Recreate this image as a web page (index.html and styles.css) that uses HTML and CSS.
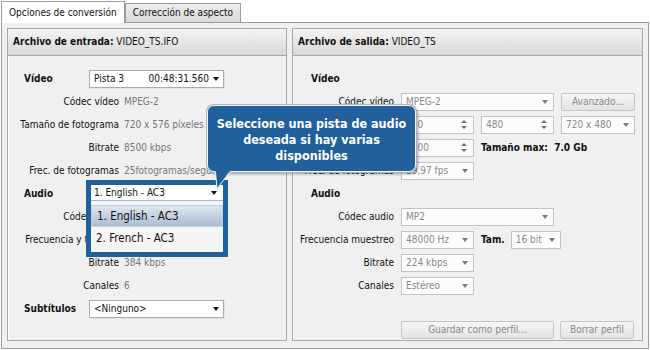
FILE: index.html
```html
<!DOCTYPE html>
<html lang="es">
<head>
  <meta charset="UTF-8" />
  <title>Opciones de conversión</title>
  <link rel="stylesheet" href="styles.css">
</head>
<body>
  <div class="window">
    <div class="tabs">
      <div class="tab active">Opciones de conversión</div>
      <div class="tab">Corrección de aspecto</div>
    </div>

    <div class="tab-body">
      <section class="panel panel-in">
        <div class="panel-head"><b>Archivo de entrada:</b> VIDEO_TS.IFO</div>
        <div class="panel-body">
          <div class="row">
            <span class="sect">Vídeo</span>
            <div class="select sel-in"><span class="grow">Pista 3</span><span>00:48:31.560</span><i class="arrow"></i></div>
          </div>
          <div class="row"><span class="lbl">Códec vídeo</span><span class="val">MPEG-2</span></div>
          <div class="row"><span class="lbl">Tamaño de fotograma</span><span class="val">720 x 576 píxeles</span></div>
          <div class="row"><span class="lbl">Bitrate</span><span class="val">8500 kbps</span></div>
          <div class="row"><span class="lbl">Frec. de fotogramas</span><span class="val">25fotogramas/segundo</span></div>
          <div class="row">
            <span class="sect">Audio</span>
            <div class="select sel-in"></div>
          </div>
          <div class="row"><span class="lbl">Códec audio</span></div>
          <div class="row"><span class="lbl">Frecuencia y tamaño</span></div>
          <div class="row"><span class="lbl">Bitrate</span><span class="val">384 kbps</span></div>
          <div class="row"><span class="lbl">Canales</span><span class="val">6</span></div>
          <div class="row">
            <span class="sect">Subtítulos</span>
            <div class="select sel-in"><span class="grow">&lt;Ninguno&gt;</span><i class="arrow"></i></div>
          </div>
        </div>
      </section>

      <section class="panel panel-out">
        <div class="panel-head"><b>Archivo de salida:</b> VIDEO_TS</div>
        <div class="panel-body">
          <div class="row"><span class="sect">Vídeo</span></div>
          <div class="row">
            <span class="lbl">Códec vídeo</span>
            <div class="field w-wide"><span class="grow">MPEG-2</span><i class="arrow"></i></div>
            <div class="btn w-btn">Avanzado...</div>
          </div>
          <div class="row">
            <span class="lbl"></span>
            <div class="field w-sm"><span class="grow">720</span><i class="spin"></i></div>
            <div class="field w-sm"><span class="grow">480</span><i class="spin"></i></div>
            <div class="field w-btn"><span class="grow">720 x 480</span><i class="arrow"></i></div>
          </div>
          <div class="row">
            <span class="lbl"></span>
            <div class="field w-sm"><span class="grow">8000</span><i class="spin"></i></div>
            <span class="note">Tamaño max:&nbsp; 7.0 Gb</span>
          </div>
          <div class="row">
            <span class="lbl">Frec. de fotogramas</span>
            <div class="field w-sm"><span class="grow">29,97 fps</span><i class="arrow"></i></div>
          </div>
          <div class="row"><span class="sect">Audio</span></div>
          <div class="row">
            <span class="lbl">Códec audio</span>
            <div class="field w-wide"><span class="grow">MP2</span><i class="arrow"></i></div>
          </div>
          <div class="row">
            <span class="lbl">Frecuencia muestreo</span>
            <div class="field w-sm"><span class="grow">48000 Hz</span><i class="arrow"></i></div>
            <span class="note">Tam.</span>
            <div class="field w-bit"><span class="grow">16 bit</span><i class="arrow"></i></div>
          </div>
          <div class="row">
            <span class="lbl">Bitrate</span>
            <div class="field w-sm"><span class="grow">224 kbps</span><i class="arrow"></i></div>
          </div>
          <div class="row">
            <span class="lbl">Canales</span>
            <div class="field w-sm"><span class="grow">Estéreo</span><i class="arrow"></i></div>
          </div>
          <div class="row row-btns">
            <span class="lbl"></span>
            <div class="btn w-wide">Guardar como perfil...</div>
            <div class="btn w-btn">Borrar perfil</div>
          </div>
        </div>
      </section>
    </div>

    <!-- open audio track list -->
    <div class="dropdown">
      <div class="dd-select"><span class="grow">1. English - AC3</span><i class="arrow"></i></div>
      <div class="dd-item hl">1. English - AC3</div>
      <div class="dd-item">2. French - AC3</div>
    </div>

    <div class="tip">
      Seleccione una pista de audio<br>deseada si hay varias<br>disponibles
      <svg class="tip-arrow" width="30" height="26" viewBox="0 0 30 26">
        <polygon points="7,0 26,0 9,23" fill="#22609c"/>
        <polyline points="21.6,6 9,23 7.5,6" fill="none" stroke="#f4f6f8" stroke-width="1"/>
      </svg>
    </div>
  </div>
</body>
</html>
```

FILE: styles.css
```css
* {
  margin: 0;
  padding: 0;
  box-sizing: border-box;
}

body {
  background: #fff;
  font-family: "DejaVu Sans Condensed", "DejaVu Sans", sans-serif;
  font-stretch: condensed;
  font-size: 10px;
  color: #111;
}

.window {
  position: relative;
  width: 650px;
  height: 350px;
  overflow: hidden;
}

/* tabs */
.tabs {
  display: flex;
  align-items: flex-end;
  height: 22px;
  padding-left: 1px;
}

.tab {
  height: 19px;
  padding: 0 7px;
  line-height: 18px;
  border: 1px solid #9c9c9c;
  border-bottom: none;
  background: linear-gradient(#ededed, #d9d9d9);
  white-space: nowrap;
}

.tab.active {
  height: 22px;
  margin-bottom: -1px;
  line-height: 21px;
  background: #fff;
  position: relative;
  z-index: 1;
}

.tab-body {
  display: flex;
  gap: 5px;
  width: 648px;
  height: 327px;
  margin-left: 1px;
  padding: 5px 5px 7px 5px;
  border: 1px solid #9c9c9c;
  background: #f0f0f0;
}

/* panels */
.panel {
  height: 313px;
  border: 1px solid #a8a8a8;
  background: #f0f0f0;
  box-shadow: inset 1px 1px 0 #fff;
  overflow: hidden;
}

.panel-in { width: 280px; }
.panel-out { width: 351px; }

.panel-head {
  height: 27px;
  line-height: 26px;
  padding-left: 5px;
  border-bottom: 1px solid #a8a8a8;
  background: linear-gradient(#f4f4f4, #d8d8d8);
  white-space: nowrap;
}

.panel-body {
  padding-top: 11px;
}

.panel-in .panel-body { padding-left: 16px; }
.panel-out .panel-body { padding-left: 18px; }

.row {
  display: flex;
  align-items: center;
  height: 23px;
  white-space: nowrap;
}

.sect {
  width: 65px;
  font-weight: bold;
}

.lbl {
  display: flex;
  justify-content: flex-end;
  flex-shrink: 0;
}

.panel-in .lbl { width: 95px; margin-right: 5px; }
.panel-out .lbl { width: 83px; margin-right: 7px; }

.val {
  color: #777;
  overflow: hidden;
  max-width: 150px;
}

.grow {
  flex: 1;
  overflow: hidden;
}

/* combo boxes */
.select {
  display: flex;
  align-items: center;
  height: 18px;
  padding: 0 4px;
  border: 1px solid #acacac;
  background: #fff;
  box-shadow: 1px 1px 0 #e2e2e2;
}

.sel-in { width: 135px; }

.arrow {
  width: 0;
  height: 0;
  margin-left: 4px;
  border-left: 3.5px solid transparent;
  border-right: 3.5px solid transparent;
  border-top: 4px solid #111;
}

.field {
  display: flex;
  align-items: center;
  height: 18px;
  padding: 0 5px 0 4px;
  margin-right: 7px;
  border: 1px solid #c3c3c3;
  background: #fcfcfc;
  color: #8a8a8a;
}

.field .arrow { border-top-color: #7a7a7a; }

/* up / down spinner */
.spin {
  display: flex;
  flex-direction: column;
  gap: 3px;
  margin-right: 1px;
}

.spin::before,
.spin::after {
  content: "";
  width: 0;
  height: 0;
  border-left: 3px solid transparent;
  border-right: 3px solid transparent;
}

.spin::before { border-bottom: 3px solid #777; }
.spin::after { border-top: 3px solid #777; }

.w-sm { width: 73px; }
.w-wide { width: 153px; }
.w-btn { width: 74px; }
.w-bit { width: 50px; }

.note {
  font-weight: bold;
  margin-right: 6px;
}

.btn {
  height: 18px;
  line-height: 16px;
  margin-right: 6px;
  text-align: center;
  border: 1px solid #c6c6c6;
  border-radius: 2px;
  background: linear-gradient(#f6f6f6, #e3e3e3);
  color: #8a8a8a;
}

.row-btns {
  margin-top: 21px;
}

/* open list */
.dropdown {
  position: absolute;
  left: 86px;
  top: 180px;
  width: 142px;
  height: 77px;
  border: 5px solid #22609c;
  background: #f5f5f5;
  z-index: 2;
}

.dd-select {
  display: flex;
  align-items: center;
  height: 16px;
  padding: 0 6px 0 3px;
  background: #fff;
  border-bottom: 1px solid #a9b4c2;
  margin-bottom: 4px;
  font-size: 10px;
}

.dd-item {
  height: 22px;
  line-height: 22px;
  padding-left: 5px;
  font-size: 11.5px;
}

.dd-item.hl {
  border: 1px solid #c4cfdd;
  line-height: 20px;
  background: linear-gradient(#dfe6ef, #adbcd1);
}

/* hint bubble */
.tip {
  position: absolute;
  left: 207px;
  top: 105px;
  width: 209px;
  height: 67px;
  padding-top: 10px;
  border: 1px solid #f4f6f8;
  border-radius: 7px;
  background: #22609c;
  box-shadow: 0 0 0 1px #a5b3c2, 2px 2px 3px rgba(0, 0, 0, 0.35);
  color: #fff;
  font-size: 12.5px;
  font-weight: bold;
  line-height: 16px;
  text-align: center;
  z-index: 3;
}

.tip-arrow {
  position: absolute;
  left: 0;
  top: 60px;
  overflow: visible;
}
```
